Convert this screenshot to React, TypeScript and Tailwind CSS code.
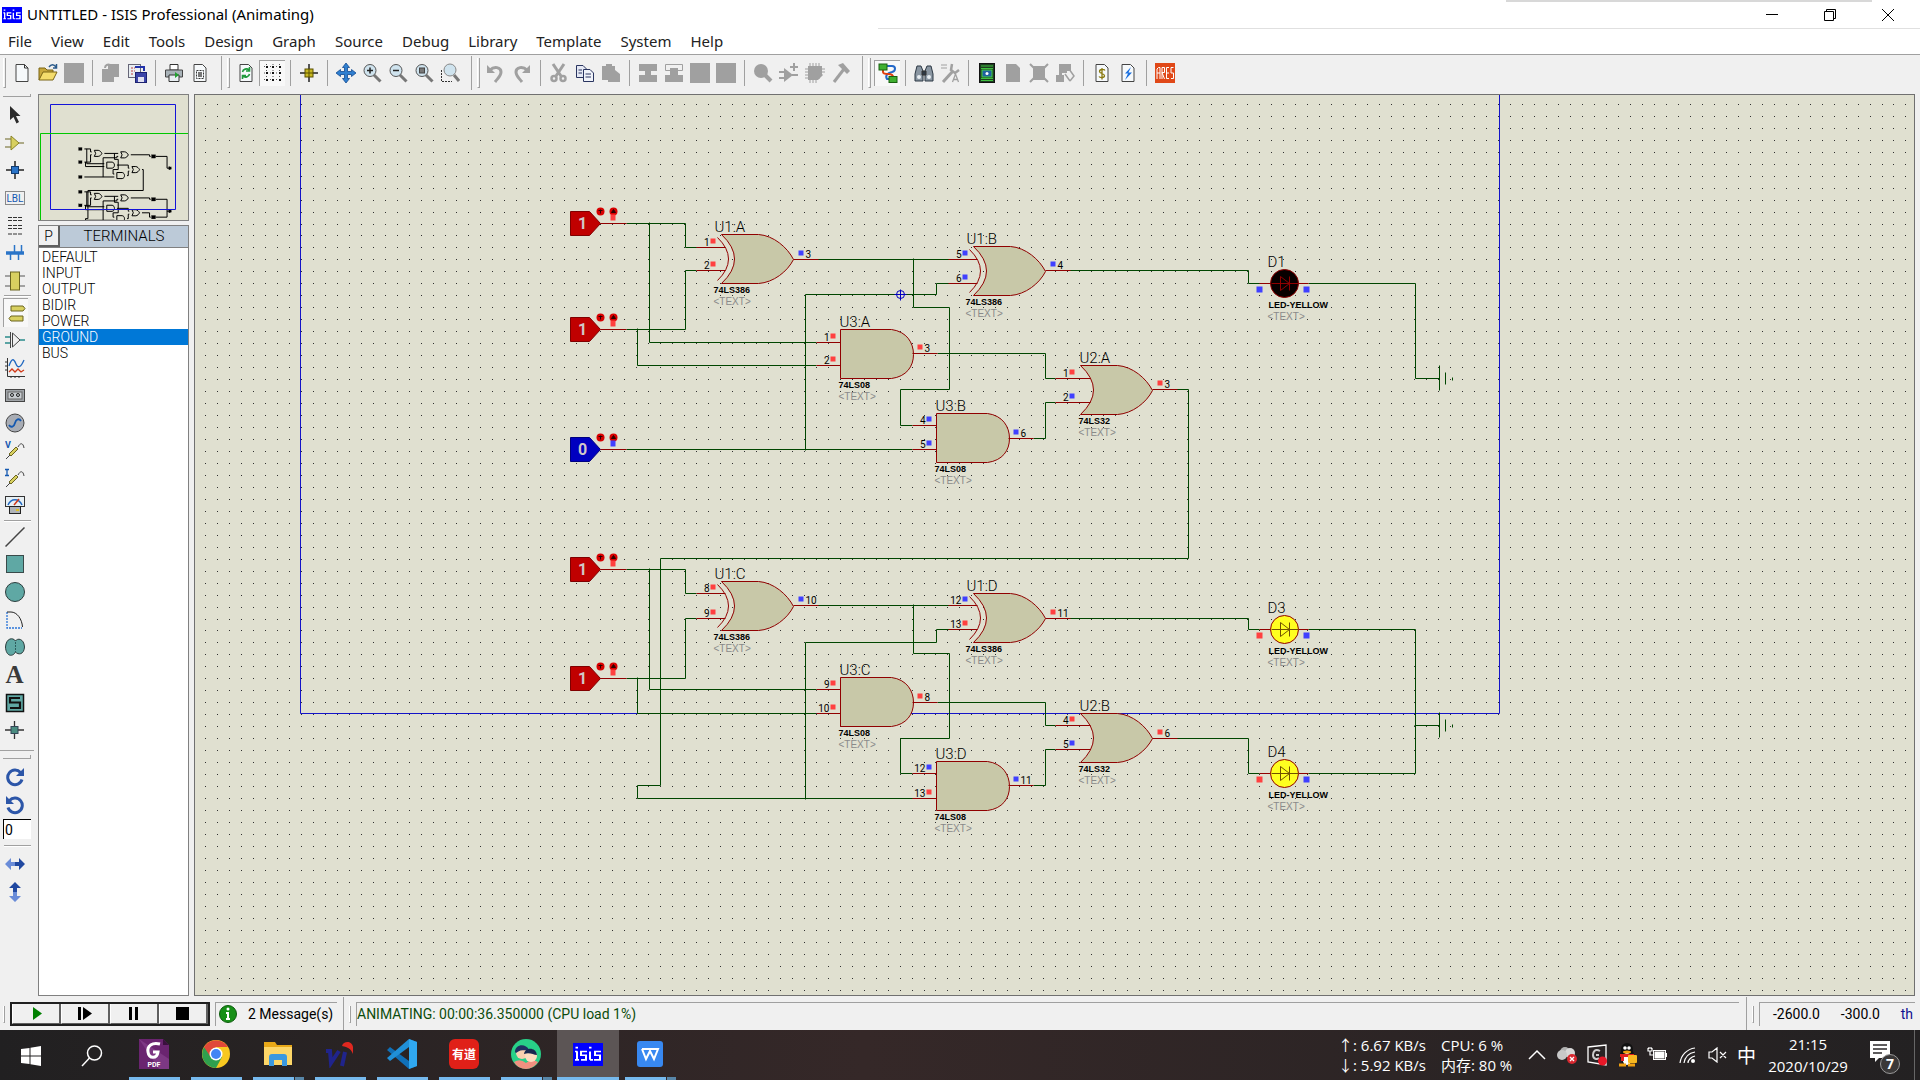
import React from "react";

type Kids = { children?: React.ReactNode };

/* ---------- schematic data (sheet pixels) ---------- */

type Gate = {
  ref: string;
  part: string;
  kind: "xor" | "and" | "or";
  x: number;
  y: number;
  ins: [number, number];
  out: number;
  nums: [string, string, string];
  hot: [boolean, boolean, boolean];
};

const gates: Gate[] = [
  { ref: "U1:A", part: "74LS386", kind: "xor", x: 721, y: 234, ins: [247, 270], out: 259, nums: ["1", "2", "3"], hot: [true, true, false] },
  { ref: "U1:B", part: "74LS386", kind: "xor", x: 973, y: 246, ins: [259, 283], out: 270, nums: ["5", "6", "4"], hot: [false, false, false] },
  { ref: "U3:A", part: "74LS08", kind: "and", x: 840, y: 329, ins: [342, 365], out: 353, nums: ["1", "2", "3"], hot: [true, true, true] },
  { ref: "U3:B", part: "74LS08", kind: "and", x: 936, y: 413, ins: [425, 449], out: 438, nums: ["4", "5", "6"], hot: [false, false, false] },
  { ref: "U2:A", part: "74LS32", kind: "or", x: 1080, y: 365, ins: [378, 402], out: 389, nums: ["1", "2", "3"], hot: [true, false, true] },
  { ref: "U1:C", part: "74LS386", kind: "xor", x: 721, y: 581, ins: [593, 618], out: 605, nums: ["8", "9", "10"], hot: [true, true, false] },
  { ref: "U1:D", part: "74LS386", kind: "xor", x: 973, y: 593, ins: [605, 629], out: 618, nums: ["12", "13", "11"], hot: [false, true, true] },
  { ref: "U3:C", part: "74LS08", kind: "and", x: 840, y: 677, ins: [689, 713], out: 702, nums: ["9", "10", "8"], hot: [true, true, true] },
  { ref: "U3:D", part: "74LS08", kind: "and", x: 936, y: 761, ins: [773, 798], out: 785, nums: ["12", "13", "11"], hot: [false, true, false] },
  { ref: "U2:B", part: "74LS32", kind: "or", x: 1080, y: 713, ins: [725, 749], out: 738, nums: ["4", "5", "6"], hot: [true, false, true] },
];

const states = [
  { y: 223, v: "1" },
  { y: 329, v: "1" },
  { y: 449, v: "0" },
  { y: 569, v: "1" },
  { y: 678, v: "1" },
];

const leds = [
  { ref: "D1", y: 283, lit: false, hot: false },
  { ref: "D3", y: 629, lit: true, hot: true },
  { ref: "D4", y: 773, lit: true, hot: true },
];

const wires = [
  "M626 223H685V247H696",
  "M649 222V342H816",
  "M626 329H685V270H696",
  "M637 328V365H816",
  "M626 449H912",
  "M805 450V294H936V283H949",
  "M817 259H949",
  "M913 258V307H949V389H900V425H912",
  "M1069 270H1248V283H1259",
  "M1308 283H1415V378H1439",
  "M937 353H1045V378H1055",
  "M1033 438H1045V402H1055",
  "M1176 389H1188V558H660V785H637V798H912",
  "M626 569H685V593H696",
  "M649 568V689H816",
  "M626 678H685V618H696",
  "M637 677V713H816",
  "M805 799V642H936V629H949",
  "M817 605H949",
  "M913 604V653H949V738H900V773H912",
  "M1069 618H1248V629H1259",
  "M1308 629H1415V773H1308",
  "M1414 725H1439",
  "M937 702H1045V725H1055",
  "M1033 785H1045V749H1055",
  "M1176 738H1248V773H1259",
].join("");

const grounds = [378, 725].map((y) => `M1439 ${y - 13}V${y + 12}M1445 ${y - 6}V${y + 6}M1452 ${y - 1}V${y + 2}`).join("");

const bodies = {
  xor: "M0 0H37C52 1 66 13 72 25C66 37 52 48 37 49H0Q26 24.500 0 0Z",
  or: "M0 0H37C52 1 66 13 72 25C66 37 52 48 37 49H0Q26 24.500 0 0Z",
  and: "M0 0H51C66 2 73 13 73 25C73 37 66 47 51 49H0Z",
};

const dots = (() => {
  let d = "";
  for (let j = 0; j < 75; j++) {
    const y = Math.floor(103.3 + j * 11.97);
    for (let i = 0; i < 143; i++) d += `M${Math.floor(205.5 + i * 11.975)} ${y}h1`;
  }
  return d;
})();

const RED = "#ff4040";
const BLUE = "#4040ff";
const PIN = "#900000";

function GateShape({ g }: { g: Gate }) {
  const inEnd = g.kind === "xor" ? 4 : g.kind === "or" ? 10 : 0;
  const start = g.kind === "and" ? g.x - 24 : g.kind === "or" ? 1055 : g.x - 25;
  const outEnd = g.x + 97;
  const sqx = g.kind === "and" ? g.x - 10 : g.x - 11;
  const label = g.kind === "xor" ? g.x - 7 : g.x - 1;
  return (
    <g>
      <g fill="none" stroke={PIN}>
        <path d={bodies[g.kind]} transform={`translate(${g.x} ${g.y})`} fill="#c8c8a8" />
        {g.kind === "xor" && <path d="M-4 3Q18 24.500 -4 46" transform={`translate(${g.x} ${g.y})`} />}
        <path d={`M${start} ${g.ins[0]}H${g.x + inEnd}M${start} ${g.ins[1]}H${g.x + inEnd}M${g.x + 72} ${g.out}H${outEnd}`} />
      </g>
      {g.ins.map((y, i) => (
        <g key={i}>
          <rect x={sqx} y={y - 9} width="5" height="5" fill={g.hot[i] ? RED : BLUE} />
          <text x={sqx - 1} y={y - 2} textAnchor="end" fontSize="10">{g.nums[i]}</text>
        </g>
      ))}
      <rect x={g.x + 77} y={g.out - 9} width="5" height="5" fill={g.hot[2] ? RED : BLUE} />
      <text x={g.x + 84} y={g.out - 2} fontSize="10">{g.nums[2]}</text>
      <text x={label} y={g.y - 3} fontSize="15" fontWeight="300">{g.ref}</text>
      <text x={label - 1} y={g.y + 58} fontSize="9" fontWeight="700" fontFamily="Liberation Sans, sans-serif">{g.part}</text>
      <text x={label - 1} y={g.y + 70} fontSize="10" fill="#8a8a8a" fontFamily="Liberation Sans, sans-serif">&lt;TEXT&gt;</text>
    </g>
  );
}

function Schematic() {
  return (
    <svg className="absolute inset-0 h-full w-full" fontFamily="Roboto, sans-serif" role="img" aria-label="Schematic sheet">
      <g transform="translate(-195 -94)">
        <path d={dots} stroke="#303030" shapeRendering="crispEdges" />
      </g>
      <g transform="translate(-194.500 -94.500)" strokeWidth="1">
        <path d="M300 80V713H1499V80" fill="none" stroke="#1414c8" />
        <path d={wires + grounds} fill="none" stroke="#004600" />
        {states.map((s) => (
          <g key={s.y}>
            <path d={`M570 ${s.y - 12}H589L600 ${s.y}L589 ${s.y + 12}H570Z`} fill={s.v === "1" ? "#c00000" : "#0000c0"} stroke={s.v === "1" ? "#800000" : "#000080"} />
            <path d={`M600 ${s.y}H626`} stroke={PIN} />
            <text x="582" y={s.y + 5} fontSize="16" fontWeight="700" textAnchor="middle" fill="#d0c8c8">{s.v}</text>
            <circle cx="600" cy={s.y - 12} r="4" fill="#d80000" />
            <circle cx="613" cy={s.y - 12} r="4" fill="#d80000" />
            <path d={`M600 ${s.y - 10}v-4m-2 1h4M611 ${s.y - 11}l2 -3l2 3z`} stroke="#300000" fill="#300000" />
            <rect x="610" y={s.y - 9} width="5" height="6" fill={s.v === "1" ? RED : BLUE} />
          </g>
        ))}
        {gates.map((g) => (
          <GateShape key={g.ref} g={g} />
        ))}
        {leds.map((l) => (
          <g key={l.ref}>
            <path d={`M1259 ${l.y}H1271M1298 ${l.y}H1308`} stroke={PIN} />
            <circle cx="1284" cy={l.y} r="14" fill={l.lit ? "#ffff20" : "#080000"} stroke={PIN} />
            <path d={`M1271 ${l.y}H1298M1280 ${l.y - 7}V${l.y + 7}L1289 ${l.y}ZM1289 ${l.y - 7}V${l.y + 7}`} fill="none" stroke={l.lit ? "#705000" : PIN} />
            <rect x="1256" y={l.y + 3} width="6" height="6" fill={l.hot ? RED : BLUE} />
            <rect x="1303" y={l.y + 3} width="6" height="6" fill={BLUE} />
            <text x="1267" y={l.y - 17} fontSize="15" fontWeight="300">{l.ref}</text>
            <text x="1268" y={l.y + 24} fontSize="9" fontWeight="700" fontFamily="Liberation Sans, sans-serif">LED-YELLOW</text>
            <text x="1267" y={l.y + 36} fontSize="10" fill="#8a8a8a" fontFamily="Liberation Sans, sans-serif">&lt;TEXT&gt;</text>
          </g>
        ))}
        <path d="M900 289V300M894 294H906M896 294a4 4 0 1 0 8 0a4 4 0 1 0 -8 0" fill="none" stroke="#0000c0" />
      </g>
    </svg>
  );
}

function Overview() {
  return (
    <svg className="block h-full w-full" role="img" aria-label="Sheet overview">
      <g transform="translate(-20.240 26.300) scale(0.1048 0.124)" fill="none" stroke="#000">
        <path d={wires + grounds} vectorEffect="non-scaling-stroke" />
        {gates.map((g) => (
          <path key={g.ref} d={bodies[g.kind]} transform={`translate(${g.x} ${g.y})`} fill="#e0e0d0" vectorEffect="non-scaling-stroke" />
        ))}
        {states.map((s) => (
          <rect key={s.y} x="570" y={s.y - 12} width="34" height="24" fill="#000" />
        ))}
        {leds.map((l) => (
          <rect key={l.ref} x="1266" y={l.y - 14} width="40" height="28" fill="#000" />
        ))}
        {[378, 725].map((y) => (
          <rect key={y} x="1430" y={y - 10} width="26" height="20" fill="#000" />
        ))}
      </g>
      <path d="M11.500 9.500H136.500V114.500H11.500Z" fill="none" stroke="#1414d8" />
      <path d="M1.500 140V38.500H160" fill="none" stroke="#00c800" />
    </svg>
  );
}

/* ---------- icons ---------- */

const Ico = ({ children }: Kids) => (
  <svg width="20" height="20" viewBox="0 0 20 20" fill="none" stroke="#333" className="block shrink-0" aria-hidden="true">
    {children}
  </svg>
);
const G = "#a0a0a0";
const page = <path d="M4 1.500H12.500L16 5V18.500H4Z" fill="#f6f9fb" stroke="#444" />;
const glass = (inner: React.ReactNode) => (
  <Ico>
    <path d="M12 12L18.500 18.500" stroke="#777" strokeWidth="3" />
    <circle cx="8" cy="7.500" r="6" fill="#cfe3ee" stroke="#555" />
    {inner}
  </Ico>
);
const solid = (
  <Ico>
    <rect x="0" y="0" width="20" height="20" fill={G} stroke="none" />
  </Ico>
);

const icons: Record<string, React.ReactNode> = {
  "New": <Ico>{page}<path d="M12.500 1.500V5H16" /></Ico>,
  "Open": <Ico><path d="M1 17V5H7L9 7H15V10" fill="#c8a83c" stroke="#7a6414" /><path d="M1 17L5 9H19L15 17Z" fill="#f4dc6c" stroke="#7a6414" /><path d="M11 4C13 1 16 1 18 4M18.500 1V5H15" stroke="#2a5a8a" strokeWidth="1.500" /></Ico>,
  "Save": solid,
  "Import": <Ico><path d="M7 1H18V14H13V19H1V6H7Z" fill={G} stroke="none" /><path d="M4 5C4 2 7 1 9 2" stroke={G} strokeWidth="2" /></Ico>,
  "Export": <Ico><rect x="1.500" y="1.500" width="12" height="13" fill="#e8eef2" stroke="#667" /><path d="M4 5H8M4 8H8M4 11H7" stroke="#c04040" strokeDasharray="2 1" /><path d="M8 4H17V8" stroke="#2233aa" strokeWidth="2" /><rect x="8.500" y="9.500" width="11" height="10" fill="#3b44a8" stroke="#1c2270" /><rect x="11" y="14" width="6" height="5" fill="#e0e0f0" stroke="none" /></Ico>,
  "Print": <Ico><path d="M6 1.500H14V7H6Z" fill="#fff" /><path d="M1.500 7H18.500V14H1.500Z" fill="#a8b2b8" stroke="#444" /><path d="M5 12H15V18.500H5Z" fill="#e8eef2" /><path d="M11 9L15 12L11 15Z" fill="#20a030" stroke="none" /></Ico>,
  "Set area": <Ico>{page}<path d="M6.500 7.500H13.500V15.500H6.500Z" strokeDasharray="2 1" /><rect x="8" y="9" width="4" height="5" fill="#777" stroke="none" /></Ico>,
  "Refresh": <Ico>{page}<path d="M6.500 9C7 6 11 5 13 7M13.500 4V8H10M13.500 11C13 14 9 15 7 13M6.500 16V12.500H10" stroke="#1f9a3c" strokeWidth="1.600" /></Ico>,
  "Grid": <Ico><path d="M1 3.500H19M1 10H19M1 16.500H19M3.500 1V19M10 1V19M16.500 1V19" stroke="#555" strokeDasharray="1 2" /><g fill="#111" stroke="none">{[3, 9, 16].map((x) => [3, 9, 16].map((y) => <rect key={`${x}-${y}`} x={x} y={y} width="2" height="2" />))}</g></Ico>,
  "Origin": <Ico><path d="M10 1V19M1 10H19" stroke="#222" strokeWidth="1.500" /><rect x="6" y="6" width="8" height="8" fill="#c8b820" stroke="#5a5000" /><path d="M10 6V14M6 10H14" stroke="#5a5000" /></Ico>,
  "Pan": <Ico><path d="M10 0L13.500 4.500H11.500V8.500H15.500V6.500L20 10L15.500 13.500V11.500H11.500V15.500H13.500L10 20L6.500 15.500H8.500V11.500H4.500V13.500L0 10L4.500 6.500V8.500H8.500V4.500H6.500Z" fill="#2f7fd0" stroke="#124a90" strokeWidth="0.800" /></Ico>,
  "Zoom in": glass(<path d="M5 7.500H11M8 4.500V10.500" stroke="#222" strokeWidth="1.500" />),
  "Zoom out": glass(<path d="M5 7.500H11" stroke="#222" strokeWidth="1.500" />),
  "Zoom all": glass(<rect x="5.500" y="5" width="5" height="5" fill="#777" stroke="#444" />),
  "Zoom area": <Ico><path d="M1.500 7V18.500H12" strokeDasharray="2 1" /><path d="M14 12L19 18" stroke="#777" strokeWidth="3" /><circle cx="10" cy="7" r="6" fill="#cfe3ee" stroke="#888" /></Ico>,
  "Undo": <Ico><path d="M4 7C8 3 15 4 15 9C15 13 12 15 9 19" stroke={G} strokeWidth="3" /><path d="M1 2V10H9Z" fill={G} stroke="none" /></Ico>,
  "Redo": <Ico><path d="M15 7C11 3 4 4 4 9C4 13 7 15 10 19" stroke={G} strokeWidth="3" /><path d="M18 2V10H10Z" fill={G} stroke="none" /></Ico>,
  "Cut": <Ico><path d="M4 1L12 13M15 1L7 13" stroke={G} strokeWidth="3" /><circle cx="5" cy="15.500" r="2.500" stroke={G} strokeWidth="2.500" /><circle cx="14" cy="15.500" r="2.500" stroke={G} strokeWidth="2.500" /></Ico>,
  "Copy": <Ico><path d="M1.500 2.500H8L11.500 6V14.500H1.500Z" fill="#e4e8f4" stroke="#2a3560" /><path d="M8.500 6.500H15L18.500 10V18.500H8.500Z" fill="#f0f3fa" stroke="#2a3560" /><path d="M3.500 7H7M3.500 10H7M10.500 11H16M10.500 14H16" stroke="#2a3560" /></Ico>,
  "Paste": <Ico><path d="M1 3H5V1H11V3H14V7L19 11V19H7V17H1Z" fill={G} stroke="none" /></Ico>,
  "Block copy": <Ico><path d="M1 1H19V8H13V12H19V19H1V12H7V8H1Z" fill={G} stroke="none" /></Ico>,
  "Block move": <Ico><path d="M1.500 1.500H18.500V7.500H1.500Z" stroke={G} /><path d="M6 5H14V12H19V19H1V12H6Z" fill={G} stroke="none" /></Ico>,
  "Block rotate": solid,
  "Block delete": solid,
  "Pick": <Ico><circle cx="8" cy="8" r="7" fill={G} stroke="none" /><path d="M12 12L18 18" stroke={G} strokeWidth="4" /></Ico>,
  "Make device": <Ico><path d="M5 5V19L14 12Z" fill={G} stroke="none" /><path d="M0 9H6M0 15H6M13 12H19M15 0V8M11 4H19" stroke={G} strokeWidth="2" /></Ico>,
  "Packaging": <Ico><path d="M3 3H17V13L13 17H3Z" fill={G} stroke="none" /><path d="M5 0V20M8 0V20M11 0V20M14 0V16M0 6H20M0 9H20M0 12H18M0 15H14" stroke={G} /></Ico>,
  "Decompose": <Ico><path d="M3 19L13 6" stroke={G} strokeWidth="3" /><path d="M7 2L12 0L19 8L16 11L12 7Z" fill={G} stroke="none" /></Ico>,
  "Wire autorouter": <Ico><path d="M9 3H14C18 3 18 8 14 9C9 10 7 13 9 16H12" stroke="#2468c8" strokeWidth="2" /><path d="M5 7V9C5 11 8 11 10 11C14 11 15 12 15 14" stroke="#e04010" strokeWidth="2" /><rect x="1" y="1" width="8" height="6" fill="#40b030" stroke="#186010" /><rect x="11" y="13.500" width="8" height="6" fill="#40b030" stroke="#186010" /></Ico>,
  "Search": <Ico><path d="M3 3H7L9 8V18H1V11ZM13 3H17L19 11V18H11V8Z" fill="#8a96a2" stroke="#2c3844" /><path d="M8 8H12V12H8Z" fill="#2c3844" /><circle cx="5" cy="14" r="2" fill="#e8eef2" stroke="none" /><circle cx="15" cy="14" r="2" fill="#e8eef2" stroke="none" /></Ico>,
  "Property assignment": <Ico><path d="M1 2H7M1 5H7" stroke={G} /><path d="M3 19L13 8" stroke={G} strokeWidth="3" /><path d="M12 1L11 7L15 10L19 7" stroke={G} strokeWidth="2.500" /><path d="M12.500 19L15.500 11L18.500 19M13.500 16.500H17.500" stroke={G} strokeWidth="1.300" /></Ico>,
  "Design explorer": <Ico><rect x="2.500" y="0.500" width="15" height="19" fill="#1c3c20" stroke="#111" /><path d="M4 3H16M4 5.500H16M4 15.500H16M4 17.500H16" stroke="#40c040" /><rect x="5" y="7" width="10" height="7" fill="#2060a0" stroke="#40d040" /><circle cx="10" cy="10.500" r="1.500" fill="#fff" stroke="none" /></Ico>,
  "New sheet": <Ico><path d="M3 1H13L17 5V19H3Z" fill={G} stroke="none" /></Ico>,
  "Remove sheet": <Ico><path d="M4 3H16V17H4Z" fill={G} stroke="none" /><path d="M1 1L19 19M19 1L1 19" stroke={G} strokeWidth="2" /></Ico>,
  "Exit to parent": <Ico><path d="M4 1H16V8H12V10H7V12H9V19H1V12H4Z" fill={G} stroke="none" /><path d="M14 6L19 13L15 18M10 11L15 18" stroke={G} strokeWidth="1.500" /></Ico>,
  "Bill of materials": <Ico>{page}<path d="M13 7.500C12 6 7.500 6 7.500 8.500C7.500 11 12.500 10 12.500 12.800C12.500 15 8 15 7 13.500M10 5V16.500" stroke="#8a7a10" strokeWidth="1.300" /></Ico>,
  "Electrical rules check": <Ico>{page}<path d="M13 4L7 10.500H10L7 17L14 9.500H10.500Z" fill="#1a70e0" stroke="none" /></Ico>,
  "Netlist to ARES": <Ico><rect width="20" height="20" fill="#e04818" stroke="none" /><path d="M2 16V6L3.500 4.500H5V16M2 10H5M7 16V4.500H9.500V9.500H7L9.500 16M14 4.500H11.500V15.500H14M11.500 10H14M18.500 4.500H16V10H18.500V15.500H16" stroke="#fff" /></Ico>,
};

const toolbar: { names: string[][]; pressed?: string; gap: string }[] = [
  { gap: "mx-[5px]", names: [["New", "Open", "Save"], ["Import", "Export"], ["Print", "Set area"]] },
  { gap: "mx-[5px]", pressed: "Grid", names: [["Refresh", "Grid"], ["Origin"], ["Pan", "Zoom in", "Zoom out", "Zoom all", "Zoom area"]] },
  { gap: "mx-[5px]", names: [["Undo", "Redo"], ["Cut", "Copy", "Paste"], ["Block copy", "Block move", "Block rotate", "Block delete"], ["Pick", "Make device", "Packaging", "Decompose"]] },
  { gap: "mx-[5px]", pressed: "Wire autorouter", names: [["Wire autorouter"], ["Search", "Property assignment"], ["Design explorer", "New sheet", "Remove sheet", "Exit to parent"], ["Bill of materials", "Electrical rules check"], ["Netlist to ARES"]] },
];

const teal = "#5fa8a4";
const chipY = "#d8d060";
const side: { name: string; icon: React.ReactNode }[][] = [
  [
    { name: "Selection", icon: <Ico><path d="M5 1V15L8.500 12L11.500 18.500L14 17L11 11H15.500Z" fill="#2a2a2a" stroke="none" /></Ico> },
    { name: "Component", icon: <Ico><path d="M0 6H6M0 14H6M13 10H19" stroke="#6a6420" /><path d="M6 3V17L14 10Z" fill={chipY} stroke="#8a8428" /></Ico> },
    { name: "Junction dot", icon: <Ico><path d="M10 1V19M1 10H19" stroke="#222" strokeWidth="1.500" /><rect x="6.500" y="6.500" width="7" height="7" fill="#2a74c8" stroke="#103a70" /></Ico> },
    { name: "Wire label", icon: <Ico><rect x="0.500" y="3.500" width="19" height="13" stroke="#222" strokeDasharray="1 1" /><text x="10" y="14" textAnchor="middle" fontSize="10" fontFamily="Roboto, sans-serif" fill="#1458b0" stroke="none">LBL</text></Ico> },
    { name: "Text script", icon: <Ico><path d="M3 1.500H17M3 4.500H17M3 9.500H17M3 12.500H17M3 18H17" stroke="#333" strokeDasharray="4 1" /></Ico> },
    { name: "Bus", icon: <Ico><path d="M1 10H19" stroke="#2a74c8" strokeWidth="3.500" /><path d="M5.500 10V17M9.500 2V10M13.500 10V17M16.500 2V10" stroke="#2a74c8" strokeWidth="1.500" /></Ico> },
    { name: "Subcircuit", icon: <Ico><path d="M0 5H20M0 15H20" stroke="#555" /><rect x="5.500" y="1" width="9" height="18" fill={chipY} stroke="#6a6420" /></Ico> },
  ],
  [
    { name: "Terminals", icon: <Ico><path d="M5 3H17L19 5.500L17 8H5ZM17 13H5L3 15.500L5 18H17Z" fill={chipY} stroke="#6a6420" /></Ico> },
    { name: "Device pins", icon: <Ico><path d="M0 7H5M0 13H5M15 10H20" stroke="#2a8a8a" strokeWidth="1.500" /><path d="M5.500 2V18M7.500 3V17L15 10Z" stroke="#444" /></Ico> },
    { name: "Graph", icon: <Ico><path d="M2.500 0V18.500H20M0 4H2M0 8H2M0 12H2M6 18V20M10 18V20M14 18V20" stroke="#333" /><path d="M4 8C7 -1 9 1 11 6S16 9 19 2" stroke="#2068c0" strokeWidth="1.300" /><path d="M4 14L7 11L10 14L13 11L16 14L19 12" stroke="#d03818" strokeWidth="1.300" /></Ico> },
    { name: "Tape recorder", icon: <Ico><rect x="0.500" y="4.500" width="19" height="12" fill="#a0a4a8" stroke="#444" /><rect x="3" y="7" width="14" height="7" fill="#c8ccd0" stroke="#666" /><circle cx="7" cy="10" r="1.500" stroke="#222" /><circle cx="13" cy="10" r="1.500" stroke="#222" /></Ico> },
    { name: "Generator", icon: <Ico><circle cx="10" cy="10" r="9" fill="#a8acb4" stroke="#444" /><path d="M4 12C6 15 9 14 10 10S14 5 16 8" stroke="#1458b0" strokeWidth="1.800" /></Ico> },
    { name: "Voltage probe", icon: <Ico><text x="0" y="8" fontSize="9" fontWeight="700" fontFamily="Roboto, sans-serif" fill="#1458b0" stroke="none">V</text><path d="M1 19L5 15M13 7C15 3 18 2 19 8" stroke="#444" /><path d="M4 14L11 7L13 9L6 16Z" fill={chipY} stroke="#6a6420" /></Ico> },
    { name: "Current probe", icon: <Ico><path d="M0 1.500H4M0 7.500H4M2 1.500V7.500" stroke="#1458b0" strokeWidth="1.300" /><path d="M1 19L5 15M13 7C15 3 18 2 19 8" stroke="#444" /><path d="M4 14L11 7L13 9L6 16Z" fill={chipY} stroke="#6a6420" /></Ico> },
    { name: "Instruments", icon: <Ico><rect x="0.500" y="1.500" width="19" height="10" fill="#e8f0f4" stroke="#333" /><path d="M3 10C6 3 14 3 17 10" stroke="#2068c0" strokeWidth="1.500" /><path d="M9 10L14 4" stroke="#d03818" strokeWidth="1.500" /><rect x="4.500" y="11.500" width="11" height="7" fill="#b0b4b8" stroke="#222" /><rect x="11" y="14" width="3" height="2" fill="#e0c020" stroke="none" /></Ico> },
  ],
  [
    { name: "Line", icon: <Ico><path d="M0.500 19.500L19.500 0.500" stroke="#444" strokeWidth="1.500" /></Ico> },
    { name: "Box", icon: <Ico><rect x="1.500" y="1.500" width="17" height="17" fill={teal} stroke="#3a4a4a" /></Ico> },
    { name: "Circle", icon: <Ico><circle cx="10" cy="10" r="9.500" fill={teal} stroke="#2c3c3c" /></Ico> },
    { name: "Arc", icon: <Ico><path d="M2 2V18H17" stroke="#2a74d8" strokeDasharray="2 1" strokeWidth="1.300" /><path d="M2 2H6C12 2 17 9 17.500 17" stroke="#222" /></Ico> },
    { name: "Path", icon: <Ico><path d="M10.500 4C12 1 19 1 19.500 10C19 18 13 18 10.500 15C8 20 1 20 0.500 10C1 1 8 0 10.500 4Z" fill={teal} stroke="#2c3c3c" /><path d="M10.500 5V15" stroke="#2c5c5c" strokeDasharray="2 1" /></Ico> },
    { name: "Text", icon: <span className="font-['Liberation_Serif',serif] text-[25px] leading-[27px] font-bold text-[#3a3a3a]">A</span> },
    { name: "Symbol", icon: <Ico><rect x="1.500" y="1.500" width="17" height="17" fill={teal} stroke="#111" strokeWidth="1.500" /><path d="M15 5H5V9.500H15V15H5" stroke="#111" strokeWidth="2.200" /></Ico> },
    { name: "Marker", icon: <Ico><path d="M9.500 1V19M0 10H19" stroke="#333" strokeWidth="1.300" /><rect x="6" y="6.500" width="7" height="7" fill="#4a8c80" stroke="#345" /></Ico> },
  ],
];

const Cw = ({ flip }: { flip?: boolean }) => (
  <Ico>
    <g transform={flip ? "translate(20 0) scale(-1 1)" : undefined}>
      <path d="M15.500 5.500A7.300 7.300 0 1 0 17 12.500" stroke="#2c56a8" strokeWidth="3" />
      <path d="M19 1V9H11Z" fill="#2c56a8" stroke="none" />
    </g>
  </Ico>
);
const Mirror = ({ v }: { v?: boolean }) => (
  <Ico>
    <g transform={v ? "rotate(-90 10 10)" : undefined} stroke="none">
      <path d="M0 10L6 4V8H10V12H6V16Z" fill="#6a8cd8" />
      <path d="M20 10L14 4V8H10V12H14V16Z" fill="#2048a0" />
    </g>
  </Ico>
);

/* ---------- chrome ---------- */

const Grip = () => <span className="h-[30px] w-[3px] border-r border-b border-[#a0a0a0] border-l border-l-white" />;
const VLine = ({ gap }: { gap: string }) => <span className={`h-[26px] w-px bg-[#a0a0a0] ${gap}`} />;
const HLine = () => <div className="ml-1 h-[2px] w-[27px] border-t border-[#a0a0a0] bg-white" />;

function Toolbar() {
  return (
    <div className="flex h-[38px] items-center border-t border-[#a0a0a0] pb-[2px] pl-[3px]" role="toolbar" aria-label="Main toolbar">
      {toolbar.map((grp, gi) => (
        <React.Fragment key={gi}>
          {gi > 0 && <span className="mr-[5px] ml-[8px] h-[34px] w-px bg-[#a0a0a0]" />}
          <Grip />
          <div className="ml-[3px] flex items-center">
            {grp.names.map((set, si) => (
              <React.Fragment key={si}>
                {si > 0 && <VLine gap={grp.gap} />}
                {set.map((n) => (
                  <button
                    key={n}
                    type="button"
                    title={n}
                    aria-label={n}
                    className={
                      n === grp.pressed
                        ? "flex h-[26px] w-[26px] items-center justify-center border-t border-l border-[#a0a0a0] bg-[#f8f8f8]"
                        : "flex h-[26px] w-[26px] items-center justify-center"
                    }
                  >
                    {icons[n]}
                  </button>
                ))}
              </React.Fragment>
            ))}
          </div>
        </React.Fragment>
      ))}
    </div>
  );
}

const Isis = ({ size }: { size: string }) => (
  <svg className={size} viewBox="0 0 30 30" preserveAspectRatio="none" aria-hidden="true">
    <rect width="30" height="30" fill="#0000ff" />
    <path d="M4 11V22M2 11H4.500M2 22H6M14 11H8V16H13V22H8M17 11V22M17 22H20M28 11H22V16H27V22H21" stroke="#fff" strokeWidth="2" fill="none" />
    <path d="M2.500 6H5M16 6H18.500" stroke="#fff" strokeWidth="2.500" />
  </svg>
);

const terminals = ["DEFAULT", "INPUT", "OUTPUT", "BIDIR", "POWER", "GROUND", "BUS"];
const menus = ["File", "View", "Edit", "Tools", "Design", "Graph", "Source", "Debug", "Library", "Template", "System", "Help"];

const tasks: { name: string; open?: boolean; multi?: boolean; active?: boolean; icon: React.ReactNode }[] = [
  { name: "Start", icon: <svg width="20" height="20" viewBox="0 0 20 20" fill="#fff"><path d="M0 3L8.500 2V9.500H0ZM9.500 1.800L20 0V9.500H9.500ZM0 10.500H8.500V18L0 17ZM9.500 10.500H20V20L9.500 18.200Z" /></svg> },
  { name: "Search", icon: <svg width="22" height="22" viewBox="0 0 22 22" fill="none" stroke="#fff" strokeWidth="1.500"><circle cx="13.500" cy="8" r="7" /><path d="M8.500 13L1 21" /></svg> },
  { name: "PDF editor", open: true, icon: <svg width="30" height="30" viewBox="0 0 30 30"><path d="M0 0H24L30 6V30H0Z" fill="#6a2470" /><path d="M0 0L30 20V30H20Z" fill="#7d3884" /><path d="M24 0V6H30Z" fill="#3a103e" /><path d="M21 5C13 3 8 7 9 13C10 20 18 20 19 13H14" fill="none" stroke="#fff" strokeWidth="3" /><text x="15" y="28" textAnchor="middle" fontSize="7" fontWeight="700" fontFamily="Roboto, sans-serif" fill="#fff">PDF</text></svg> },
  { name: "Chrome", open: true, icon: <svg width="28" height="28" viewBox="0 0 28 28"><circle cx="14" cy="14" r="14" fill="#f8c820" /><path d="M14 14L2 7A14 14 0 0 0 14 28L20 17Z" fill="#2fa04e" /><path d="M14 7H26A14 14 0 0 0 2 7L8 16Z" fill="#e04838" /><circle cx="14" cy="14" r="6.500" fill="#fff" /><circle cx="14" cy="14" r="5" fill="#4285f4" /></svg> },
  { name: "File Explorer", open: true, multi: true, icon: <svg width="28" height="24" viewBox="0 0 28 24"><path d="M0 0H11L13 3H28V23H0Z" fill="#e8a818" /><path d="M0 5H28V23H0Z" fill="#fcd668" /><path d="M5 24V15Q5 12 8 12H20Q23 12 23 15V24H18V18H10V24Z" fill="#3a98e0" /></svg> },
  { name: "VI", open: true, icon: <svg width="30" height="28" viewBox="0 0 30 28" fill="none"><path d="M1 11H5L6 23L14 11" stroke="#20248c" strokeWidth="4" /><path d="M20 12L17 26" stroke="#20248c" strokeWidth="4" /><path d="M17 6C18 1 27 0 28 7V14C26 9 23 7 17 6Z" fill="#e02820" /></svg> },
  { name: "Visual Studio Code", open: true, icon: <svg width="30" height="30" viewBox="0 0 30 30"><path d="M22 0L30 3V27L22 30L0 11L3 8L22 22Z" fill="#1070b8" /><path d="M22 0V8L3 22L0 19Z" fill="#2090d8" /><path d="M22 0L30 3V27L22 30Z" fill="#30a8f0" /></svg> },
  { name: "Youdao", open: true, icon: <span className="flex h-[30px] w-[30px] items-center justify-center rounded-md bg-[#e02018] font-['Noto_Sans_CJK_SC',sans-serif] text-[12px] leading-none font-bold text-white">有道</span> },
  { name: "Contacts", open: true, multi: true, icon: <svg width="30" height="30" viewBox="0 0 30 30"><circle cx="15" cy="15" r="15" fill="#28d088" /><path d="M3 23Q9 19 15 24Q20 19 27 23Q22 30 15 30Q7 30 3 23Z" fill="#f09080" /><circle cx="11" cy="14" r="6" fill="#f8d0b0" /><path d="M4 13C4 5 15 4 18 11C13 12 10 10 5 14Z" fill="#203060" /><circle cx="20" cy="17" r="6" fill="#fcdcc0" /><path d="M13 15C14 8 25 8 26 16C22 16 19 13 13 15Z" fill="#182850" /></svg> },
  { name: "ISIS", open: true, active: true, icon: <Isis size="h-[23px] w-[30px]" /> },
  { name: "WPS", open: true, multi: true, icon: <svg width="26" height="26" viewBox="0 0 26 26"><rect width="26" height="26" rx="3" fill="#3888f0" /><path d="M5 8H21L17 18L13 10L9 18L5 8" fill="none" stroke="#fff" strokeWidth="2" /></svg> },
];

const simButtons: { name: string; shape: React.ReactNode }[] = [
  { name: "Play", shape: <path d="M6 1L15 7.500L6 14Z" fill="#008000" /> },
  { name: "Step", shape: <path d="M2 1H5V14H2ZM7 1L16 7.500L7 14Z" fill="#000" /> },
  { name: "Pause", shape: <path d="M4 1H7V14H4ZM10 1H13V14H10Z" fill="#000" /> },
  { name: "Stop", shape: <path d="M2 1H15V14H2Z" fill="#000" /> },
];

export default function App() {
  return (
    <div className="flex h-screen w-full flex-col overflow-hidden bg-[#f0f0f0] font-[Roboto,sans-serif] text-black">
      <header className="relative flex h-[29px] shrink-0 items-center bg-white pl-[2px]">
        <div className="absolute top-0 right-12 h-[2px] w-[366px] bg-[#d8d8d8]" />
        <div className="absolute right-0 bottom-0 h-px w-[1042px] bg-[#e0e0e0]" />
        <Isis size="h-[16px] w-[20px]" />
        <h1 className="ml-[5px] font-['Noto_Sans',sans-serif] text-[15px] leading-none">UNTITLED - ISIS Professional (Animating)</h1>
        <div className="ml-auto flex items-center">
          <button type="button" aria-label="Minimize" className="flex h-7 w-[58px] items-center justify-center">
            <svg width="12" height="12" stroke="#000"><path d="M0 5.500H12" /></svg>
          </button>
          <button type="button" aria-label="Restore" className="flex h-7 w-[58px] items-center justify-center">
            <svg width="12" height="12" fill="none" stroke="#000"><path d="M0.500 2.500H9.500V11.500H0.500ZM2.500 2.500V0.500H11.500V9.500H9.500" /></svg>
          </button>
          <button type="button" aria-label="Close" className="mr-[3px] flex h-7 w-[58px] items-center justify-center">
            <svg width="12" height="12" stroke="#000"><path d="M0 0L12 12M12 0L0 12" /></svg>
          </button>
        </div>
      </header>

      <nav className="flex h-[25px] shrink-0 items-center gap-px bg-white font-['Noto_Sans',sans-serif] text-[15px] leading-none text-[#222]">
        {menus.map((m) => (
          <button key={m} type="button" className="px-[9px] pb-[1px] first:pl-[8px]">{m}</button>
        ))}
      </nav>

      <Toolbar />

      <main className="flex min-h-0 flex-1 pt-[2px]">
        <aside className="flex w-[38px] shrink-0 flex-col" aria-label="Modes">
          <div className="ml-[3px] h-[3px] w-7 border-r border-b border-[#a0a0a0]" />
          {side.map((set, i) => (
            <React.Fragment key={i}>
              {i > 0 && <HLine />}
              <div className={i === 0 ? "mt-[4px] flex h-[194px] flex-col" : "flex h-[223px] flex-col py-[1px]"}>
                {set.map((s) => (
                  <button
                    key={s.name}
                    type="button"
                    title={s.name}
                    aria-label={s.name}
                    className={
                      s.name === "Terminals"
                        ? "ml-[3px] flex min-h-0 w-[25px] flex-1 items-center justify-center border-t border-l border-[#a0a0a0] bg-[#f8f8f8]"
                        : "ml-[2px] flex min-h-0 w-[25px] flex-1 items-center justify-center"
                    }
                  >
                    {s.icon}
                  </button>
                ))}
              </div>
            </React.Fragment>
          ))}
          <div className="mt-[5px] w-[34px] border-t border-[#a0a0a0]" />
          <div className="mt-[4px] ml-[3px] h-[4px] w-7 border-r border-b border-[#a0a0a0]" />
          <button type="button" aria-label="Rotate clockwise" className="mt-[4px] ml-[2px] flex h-7 w-[25px] items-center justify-center"><Cw /></button>
          <button type="button" aria-label="Rotate anticlockwise" className="ml-[2px] flex h-7 w-[25px] items-center justify-center"><Cw flip /></button>
          <input aria-label="Rotation angle" defaultValue="0" className="ml-[3px] h-5 w-[28px] border-t border-l border-black bg-white pl-px text-sm leading-none outline-none" />
          <div className="mt-[6px]"><HLine /></div>
          <button type="button" aria-label="Mirror horizontally" className="mt-[3px] ml-[2px] flex h-7 w-[25px] items-center justify-center"><Mirror /></button>
          <button type="button" aria-label="Mirror vertically" className="ml-[2px] flex h-7 w-[25px] items-center justify-center"><Mirror v /></button>
        </aside>

        <div className="flex w-[151px] shrink-0 flex-col gap-1">
          <div className="h-[127px] shrink-0 overflow-hidden border border-[#808080] bg-[#e0e0d0]">
            <Overview />
          </div>
          <section className="flex min-h-0 flex-1 flex-col border border-[#808080] bg-white">
            <div className="flex h-[22px] shrink-0 items-center border-b border-[#808080] bg-[#bccad8]">
              <button type="button" aria-label="Pick" className="h-full w-[21px] border-r-2 border-b-2 border-[#606060] bg-[#f0f0f0] text-sm leading-none font-light">P</button>
              <h2 className="flex-1 text-center text-[15px] leading-none font-light">TERMINALS</h2>
            </div>
            <ul className="pt-px text-sm leading-4 font-light">
              {terminals.map((t) => (
                <li key={t} className={t === "GROUND" ? "bg-[#0078d7] pl-[3px] text-white" : "pl-[3px]"}>{t}</li>
              ))}
            </ul>
          </section>
        </div>

        <section className="relative mr-[5px] ml-[5px] min-w-0 flex-1 overflow-hidden border border-[#707070] bg-[#e0e0d0]">
          <Schematic />
        </section>
      </main>

      <footer className="flex h-[34px] shrink-0 items-center pt-[1px] text-sm leading-none">
        <span className="ml-[3px]"><Grip /></span>
        <div className="ml-[5px] flex border-2 border-[#202020]">
          {simButtons.map((b) => (
            <button key={b.name} type="button" aria-label={b.name} className="flex h-[20px] w-[49px] items-center justify-center border-r-2 border-b border-[#606060] border-l border-l-white bg-[#f0f0f0]">
              <svg width="18" height="15" viewBox="0 0 18 15">{b.shape}</svg>
            </button>
          ))}
        </div>
        <div className="ml-[5px] flex h-[24px] w-[122px] items-center border-t border-l border-[#a0a0a0] pl-[3px]">
          <svg width="18" height="18" viewBox="0 0 18 18"><circle cx="9" cy="9" r="8.500" fill="#189018" stroke="#0c5c0c" /><path d="M9 7V14M7 8H9M7 14H11" stroke="#fff" strokeWidth="2" /><circle cx="9" cy="4" r="1.500" fill="#fff" /></svg>
          <span className="ml-[11px]">2 Message(s)</span>
        </div>
        <span className="ml-[6px] h-[34px] w-px bg-[#a0a0a0]" />
        <span className="ml-[5px]"><Grip /></span>
        <div className="ml-[5px] flex h-[24px] flex-1 items-center border-t border-l border-[#a0a0a0] text-[#0c4c0c]">ANIMATING: 00:00:36.350000 (CPU load 1%)</div>
        <span className="ml-[7px] h-[34px] w-px bg-[#a0a0a0]" />
        <span className="ml-[5px]"><Grip /></span>
        <div className="mr-[5px] ml-[5px] flex h-[24px] w-[156px] items-center justify-between border-t border-l border-[#a0a0a0] pr-[2px] pl-[13px]">
          <span>-2600.0</span>
          <span>-300.0</span>
          <span className="text-[#101090]">th</span>
        </div>
      </footer>

      <div className="flex h-[50px] shrink-0 items-stretch bg-linear-to-r from-[#212021] via-[#352828] via-45% to-[#232122] text-white">
        {tasks.map((t) => (
          <button
            key={t.name}
            type="button"
            aria-label={t.name}
            className={t.active ? "flex w-[62px] flex-col items-center bg-[#5c5555]" : "flex w-[62px] flex-col items-center first:w-[61px]"}
          >
            <span className="flex flex-1 items-center pt-[1px]">{t.icon}</span>
            {t.open && (
              <span className={t.active ? "flex h-[3px] w-full bg-[#76b9ed]" : "flex h-[3px] w-[51px] justify-end bg-[#76b9ed]"}>
                {t.multi && <span className="w-[10px] border-l border-[#302828] bg-[#5886a8]" />}
              </span>
            )}
          </button>
        ))}
        <div className="ml-auto flex items-center font-['Open_Sans','Noto_Sans_CJK_SC',sans-serif] text-[15px] leading-[20px]">
          <div className="w-[103px]"><div>↑: 6.67 KB/s</div><div>↓: 5.92 KB/s</div></div>
          <div className="w-[87px]"><div>CPU: 6 %</div><div>内存: 80 %</div></div>
          <div className="flex items-center">
            <svg className="mr-[11px]" width="18" height="12" fill="none" stroke="#fff" strokeWidth="1.500"><path d="M1 10L9 2L17 10" /></svg>
            <svg className="mr-[10px]" width="20" height="20"><circle cx="8" cy="7" r="5" fill="#b0b0b0" /><circle cx="13" cy="8" r="5" fill="#d8d8d8" /><circle cx="5" cy="10" r="5" fill="#c8c8c8" /><circle cx="15" cy="14" r="5" fill="#d82830" /><path d="M13 12L17 16M17 12L13 16" stroke="#fff" strokeWidth="1.300" /></svg>
            <svg className="mr-[10px]" width="20" height="22" fill="none" stroke="#fff"><path d="M1 3L19 1V21L1 18Z" strokeWidth="1.300" /><path d="M13 7C8 4 6 8 6 11C6 15 10 16 12 14M9 11H12" strokeWidth="2" stroke="#ccc" /><circle cx="15.500" cy="17" r="4.500" fill="#e81828" stroke="none" /></svg>
            <svg className="mr-[10px]" width="20" height="24"><ellipse cx="10" cy="13" rx="7" ry="9" fill="#111" /><circle cx="10" cy="6" r="6" fill="#111" /><ellipse cx="10" cy="16" rx="4.500" ry="6" fill="#fff" /><circle cx="8" cy="5" r="1.800" fill="#fff" /><circle cx="12" cy="5" r="1.800" fill="#fff" /><ellipse cx="10" cy="9" rx="4" ry="1.500" fill="#f0a010" /><path d="M3 11H17V14H3ZM4 13H7V18H4Z" fill="#e02020" /><path d="M2 22H9M11 22H18" stroke="#f0a010" strokeWidth="3" /><rect x="11" y="12" width="9" height="8" rx="1" fill="#f8b820" /></svg>
            <svg className="mr-[12px]" width="20" height="16" fill="none" stroke="#fff"><path d="M1 1V4H5V1M2 0V2M4 0V2M3 4V8H6" strokeWidth="1.200" /><rect x="6.500" y="3.500" width="12" height="9" /><rect x="8" y="5" width="9" height="6" fill="#fff" /><path d="M19.500 6V10" /></svg>
            <svg className="mr-[12px]" width="17" height="17" fill="none" stroke="#fff" strokeWidth="1.200"><path d="M1 16C2 8 8 2 16 1M5 16C6 10 10 6 16 5M9 16C9 13 12 10 16 9" /><circle cx="14" cy="14" r="2" fill="#fff" stroke="none" /></svg>
            <svg className="mr-[10px]" width="19" height="16" fill="none" stroke="#fff" strokeWidth="1.200"><path d="M1 5H4L9 1V15L4 11H1ZM12 5L18 11M18 5L12 11" /></svg>
            <span className="mr-[10px] font-['Noto_Sans_CJK_SC',sans-serif] text-[19px]">中</span>
          </div>
          <div className="w-[84px] text-center leading-[22px]"><div>21:15</div><div>2020/10/29</div></div>
          <button type="button" aria-label="7 notifications" className="relative ml-[20px] h-[38px] w-[32px]">
            <svg width="32" height="38" fill="none"><path d="M0 5H20V22H9L5 26V22H0Z" fill="#fff" /><path d="M3 9H17M3 13H17M3 17H12" stroke="#2a2728" strokeWidth="1.500" /><circle cx="20" cy="28" r="9.500" fill="#3a3838" stroke="#999" /><text x="20" y="33" textAnchor="middle" fontSize="14" fontWeight="700" fontFamily="Open Sans, sans-serif" fill="#fff">7</text></svg>
          </button>
          <span className="ml-[12px] h-[50px] w-[6px] border-l border-[#666]" />
        </div>
      </div>
    </div>
  );
}
